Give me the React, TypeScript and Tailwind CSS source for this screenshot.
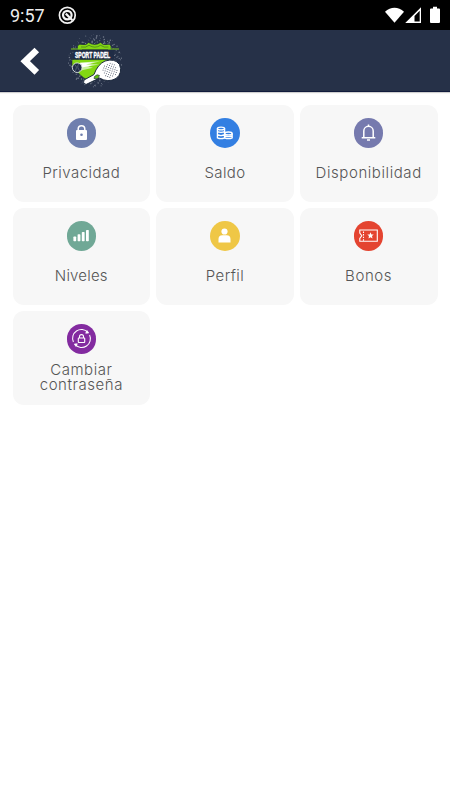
import type {ReactNode} from 'react';

type Option = {
  label: string;
  color: string;
  spacing: string;
  icon: ReactNode;
};

const options: Option[] = [
  {label: 'Privacidad', color: 'bg-[#6f7fae]', spacing: 'tracking-[0.47px]', icon: <LockIcon />},
  {label: 'Saldo', color: 'bg-[#337fe2]', spacing: 'tracking-[0.4px]', icon: <CoinsIcon />},
  {label: 'Disponibilidad', color: 'bg-[#767aae]', spacing: 'tracking-[0.58px]', icon: <BellIcon />},
  {label: 'Niveles', color: 'bg-[#70a896]', spacing: 'tracking-[0.2px]', icon: <LevelsIcon />},
  {label: 'Perfil', color: 'bg-[#efc746]', spacing: 'tracking-[0.45px]', icon: <PersonIcon />},
  {label: 'Bonos', color: 'bg-[#e44430]', spacing: 'tracking-[0.6px]', icon: <TicketIcon />},
  {label: 'Cambiar contraseña', color: 'bg-[#832ba0]', spacing: 'tracking-[0.55px]', icon: <RenewLockIcon />}
];

export default function App() {
  return (
    <div className="flex h-[800px] w-[450px] flex-col bg-white font-['Inter',sans-serif]">
      <StatusBar />
      <Header />
      <main className="grid grid-cols-3 gap-x-[6px] gap-y-[6px] px-[12.5px] pt-[13px]">
        {options.map((option) => (
          <OptionCard key={option.label} option={option} />
        ))}
      </main>
    </div>
  );
}

function StatusBar() {
  return (
    <div className="flex h-[30px] shrink-0 items-center bg-black pl-[10px] pr-[9px] text-white">
      <span className="font-['Roboto',sans-serif] text-[18px] leading-[31px] text-[#eeeeee]">9:57</span>
      <svg className="ml-[13px]" width="19" height="19" viewBox="0 0 19 19" fill="none" stroke="#f2f2f2">
        <circle cx="9.3" cy="9.3" r="7.9" strokeWidth="1.7" />
        <circle cx="9.3" cy="9.1" r="4.3" strokeWidth="2.2" />
        <path d="M7.8 7.6l6.6 6.6" strokeWidth="2.2" />
      </svg>
      <svg className="ml-auto" width="56" height="20" viewBox="0 0 56 20" fill="#fff">
        <path d="M0 6.8C5.6 1.4 13.4 1.4 19 6.8L9.5 17.8Z" />
        <path fillRule="evenodd" d="M20.2 18L36 2.3V18ZM29.5 10.9V16.6H34.7V5.7Z" />
        <path d="M45 3.5H48V1.7H52V3.5H54Q55 3.5 55 4.5V17Q55 18 54 18H46Q45 18 45 17V4.5Q45 3.5 46 3.5Z" />
      </svg>
    </div>
  );
}

function Header() {
  return (
    <header className="flex h-[62px] shrink-0 items-center border-b border-[#111b3c] bg-[#263148] pl-[20px] shadow-[0_1px_1px_#00000030]">
      <svg width="20" height="28" viewBox="0 0 20 28" fill="none" stroke="#fff" strokeWidth="6.6">
        <path d="M16.8 3L5.2 14.2L16.8 25.4" />
      </svg>
      <Logo />
    </header>
  );
}

/** Fixed spray of paint specks behind the shield. */
const specks = Array.from({length: 300}, (_, i) => {
  const angle = i * 2.39996 + Math.sin(i * 12.9) * 0.25;
  const radius = 15 + (((i * 37) % 101) / 101) ** 1.3 * 12;
  return {
    x: 27 + Math.cos(angle) * radius,
    y: 27.5 + Math.sin(angle) * radius,
    size: 0.3 + ((i * 13) % 5) * 0.11
  };
});

const holes = Array.from({length: 49}, (_, i) => ({x: (i % 7) - 3, y: Math.floor(i / 7) - 3})).filter(
  ({x, y}) => x * x + y * y <= 11
);

function Logo() {
  return (
    <svg className="ml-[28px]" width="56" height="56" viewBox="0 0 56 56">
      {specks.map((speck, i) => (
        <circle key={i} cx={speck.x} cy={speck.y} r={speck.size} fill="#aab1bd" opacity="0.6" />
      ))}
      <path
        d="M9.5 17V13Q11 10.5 14 11.5Q18.5 12.5 20.5 9.5Q27 13.5 32.5 9.5Q35 12.5 39 11.5Q42 10.5 43 13V17Z"
        fill="#82d713"
        stroke="#1a2637"
        strokeWidth="0.6"
      />
      <path d="M13 14Q18 15 21 12.3Q27 16 32.5 12.3Q36 15 40.5 14" fill="none" stroke="#294b27" strokeWidth="0.5" />
      <path d="M4 26.5H42Q40 36 33 41.5L24 49Q14 45 10.5 40L4 33Z" fill="#82d713" stroke="#1a2637" strokeWidth="0.6" />
      <path d="M2.5 16.4H51L46 18V26H5.5V18Z" fill="#202c45" />
      <path d="M3 16H14M40 16H51" stroke="#78c51d" strokeWidth="1" />
      <path d="M12 29.4L32 28.2L22 31L31 31.4L20 33.4L25 34.8L13 37.4Z" fill="#c9efa0" />
      <path d="M12 30L26 29.2L18 31.6L24 32.4L14 34.6Z" fill="#fff" />
      <circle cx="9.2" cy="34.7" r="4.8" fill="#202c45" stroke="#dce4e4" strokeWidth="0.9" />
      <path d="M6.5 31.5Q10 34 7 38M11 31Q8 34 12 38" fill="none" stroke="#8493a2" strokeWidth="0.5" />
      <path
        d="M16 47L26 41.5Q29.5 31.5 37 28Q47 25 51.5 31.5Q55 40 48 45.5Q40 50 31.5 45L18 51.5Q14 50 16 47Z"
        fill="#fff"
        stroke="#1c293d"
        strokeWidth="1"
      />
      <path d="M26.5 43.5Q29 40.5 31.5 42.5L30 45.5H26Z" fill="#62bd13" stroke="#1c293d" strokeWidth="0.6" />
      <g transform="rotate(20 42 37.3)">
        {holes.map((hole, i) => (
          <circle key={i} cx={42 + hole.x * 2.2} cy={37.3 + hole.y * 2.2} r="0.5" fill="#3d485c" />
        ))}
      </g>
      <text
        x="7"
        y="15"
        fill="#fff"
        stroke="#fff"
        strokeWidth="0.25"
        className="font-['Liberation_Sans',sans-serif] text-[5px] font-bold"
        transform="scale(1 1.65)"
      >
        SPORT PADEL
      </text>
    </svg>
  );
}

function OptionCard({option}: {option: Option}) {
  const twoLines = option.label.includes(' ');

  return (
    <div
      className={`flex flex-col items-center rounded-[11px] bg-[#f7f7f7] pt-[13px] ${twoLines ? 'h-[94px]' : 'h-[97px]'}`}
    >
      <div className={`flex size-[29.5px] shrink-0 items-center justify-center rounded-full ${option.color}`}>
        {option.icon}
      </div>
      <div
        className={`text-center text-[15px] font-light text-[#555] ${option.spacing} ${
          twoLines ? 'mt-[8.5px] w-[100px] leading-[15px]' : 'mt-[15px] leading-[20px]'
        }`}
      >
        {option.label}
      </div>
    </div>
  );
}

function LockIcon() {
  return (
    <svg width="29" height="29" viewBox="0 0 29 29" fill="none">
      <path d="M11.2 13V11A3.3 3.3 0 0 1 17.8 11V13" stroke="#fff" strokeWidth="1.5" />
      <rect x="9" y="12" width="11" height="10" rx="1" fill="#fff" />
      <circle cx="14.5" cy="16.8" r="1.3" fill="#6f7fae" />
    </svg>
  );
}

function CoinsIcon() {
  return (
    <svg width="29" height="29" viewBox="0 0 29 29" fill="none" stroke="#fff" strokeWidth="1.3">
      <ellipse cx="11" cy="10.5" rx="3.6" ry="1.4" />
      <path d="M7.4 10.5V19.8Q11 21.6 14.6 19.8V10.5M7.4 13.5Q11 15.3 14.6 13.5M7.4 16.7Q11 18.5 14.6 16.7" />
      <ellipse cx="18.4" cy="15.4" rx="3.8" ry="1.4" />
      <path d="M14.6 15.4V19.8Q18.4 21.6 22.2 19.8V15.4M14.6 17.6Q18.4 19.4 22.2 17.6" />
    </svg>
  );
}

function BellIcon() {
  return (
    <svg width="29" height="29" viewBox="0 0 29 29" fill="none" stroke="#fff" strokeWidth="1.5">
      <path d="M7.7 19.7H21.3M9.8 19.7V13A4.7 4.7 0 0 1 19.2 13V19.7M14.5 8.3V6.5M13 22H16" />
    </svg>
  );
}

function LevelsIcon() {
  return (
    <svg width="29" height="29" viewBox="0 0 29 29" fill="#fff">
      <rect x="6.4" y="15.5" width="2.8" height="4.7" rx="0.7" />
      <rect x="10.6" y="13.3" width="2.8" height="6.9" rx="0.7" />
      <rect x="14.8" y="11.1" width="2.8" height="9.1" rx="0.7" />
      <rect x="19" y="8.9" width="2.8" height="11.3" rx="0.7" />
    </svg>
  );
}

function PersonIcon() {
  return (
    <svg width="29" height="29" viewBox="0 0 29 29" fill="#fff">
      <circle cx="14.5" cy="10.5" r="3.1" />
      <path d="M8.5 21.5V18Q8.5 14.2 12.3 14.2H16.7Q20.5 14.2 20.5 18V21.5Z" />
    </svg>
  );
}

function TicketIcon() {
  return (
    <svg width="29" height="29" viewBox="0 0 29 29" fill="none">
      <path d="M5.8 9H23.3V20.3H5.8V17.5L7.8 14.7L5.8 12Z" stroke="#fff" strokeWidth="1.1" />
      <path d="M9.5 10.5V20" stroke="#fff" strokeWidth="1.1" strokeDasharray="1.4 1.2" />
      <path
        d="M16.5 11.3L17.4 13.4L19.7 13.6L18 15.1L18.5 17.4L16.5 16.2L14.5 17.4L15 15.1L13.3 13.6L15.6 13.4Z"
        fill="#fff"
      />
    </svg>
  );
}

function RenewLockIcon() {
  return (
    <svg width="29" height="29" viewBox="0 0 29 29" fill="none" stroke="#fff">
      <path d="M6.4 18A8.8 8.8 0 0 1 20.8 8.3M22.6 11A8.8 8.8 0 0 1 8.2 20.7" strokeWidth="1.05" />
      <path d="M20 6.5L21.7 9L18.7 9.2ZM9 22.5L7.3 20L10.3 19.8Z" fill="#fff" strokeWidth="0.7" />
      <path d="M12.5 14V12.6A2 2 0 0 1 16.5 12.6V14" strokeWidth="1.1" />
      <rect x="11.3" y="14" width="6.4" height="4.5" rx="0.4" strokeWidth="1.1" />
    </svg>
  );
}
